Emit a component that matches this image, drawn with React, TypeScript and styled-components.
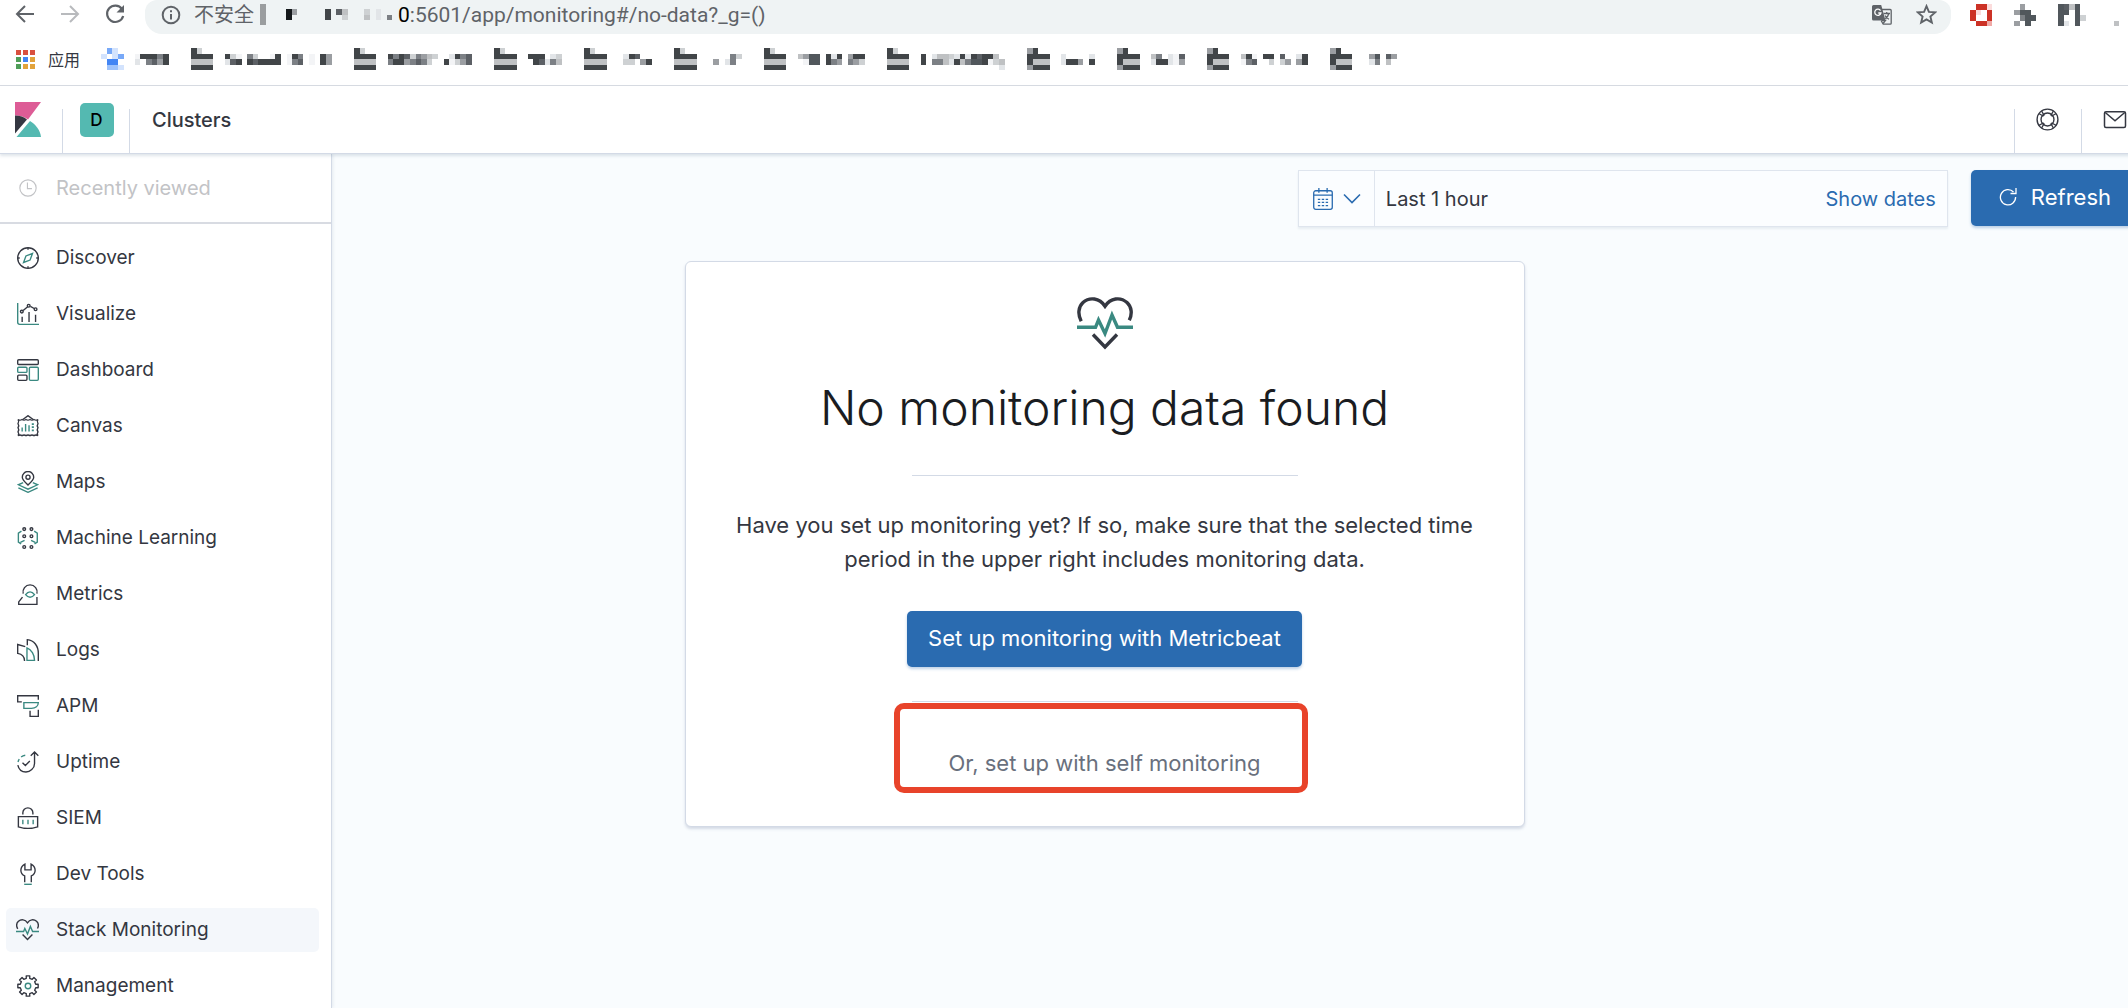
import React from "react";
import styled, { createGlobalStyle, css } from "styled-components";

const color = {
  ink: "#343741",
  title: "#1a1c21",
  subdued: "#69707d",
  faint: "#c2c3c6",
  border: "#d3dae6",
  rule: "#d8dbe2",
  page: "#f9fcfe",
  primary: "#2a6bb0",
  teal: "#3a8981",
  chrome: "#5f6368",
  red: "#e8432a",
};

const GlobalStyle = createGlobalStyle`
  *, *::before, *::after { box-sizing: border-box; }
  body {
    margin: 0;
    background: #fff;
    color: ${color.ink};
    font-family: Inter, "Noto Sans CJK SC", sans-serif;
    font-size: 20px;
    line-height: 28px;
    overflow: hidden;
  }
  button, input { font: inherit; color: inherit; }
  a { color: inherit; text-decoration: none; }
`;

const plainButton = css`
  display: flex;
  align-items: center;
  justify-content: center;
  padding: 0;
  border: 0;
  background: none;
  cursor: pointer;
`;

const Page = styled.div`
  display: flex;
  flex-direction: column;
  height: 100vh;
  margin-right: -20px;
`;

/* ---------- browser chrome ---------- */

const AddressRow = styled.div`
  display: flex;
  align-items: center;
  height: 34px;
  padding-left: 13px;
`;

const NavButtons = styled.div`
  display: flex;
  gap: 21px;
  padding-bottom: 6px;
  margin-right: 18px;
`;

const ChromeButton = styled.button<{ $dim?: boolean }>`
  ${plainButton}
  color: ${(p) => (p.$dim ? "#b8babd" : color.chrome)};
`;

const AddressBar = styled.div`
  display: flex;
  flex: 1;
  align-items: center;
  height: 34px;
  padding: 0 14px 5px 16px;
  border-radius: 12px 12px 17px 17px;
  background: #eff3f4;
  color: ${color.chrome};
  font-family: Roboto, "Noto Sans CJK SC", sans-serif;
`;

const SiteStatus = styled.span`
  margin: 0 6px 0 13px;
  white-space: nowrap;
`;

const Caret = styled.span`
  width: 6px;
  height: 21px;
  margin-right: 20px;
  background: #9a9d9f;
`;

const HostEnd = styled.label`
  color: #000;
  font-size: 21px;
`;

const UrlInput = styled.input`
  flex: 1;
  min-width: 0;
  height: 28px;
  padding: 0;
  border: 0;
  outline: 0;
  background: none;
  font-size: 21px;
`;

const AddressActions = styled.div`
  display: flex;
  gap: 24px;
`;

const Extensions = styled.div`
  display: flex;
  gap: 22px;
  padding: 0 29px 5px 19px;
`;

const BookmarkBar = styled.nav`
  display: flex;
  align-items: center;
  height: 52px;
  padding: 0 0 1px 16px;
  border-bottom: 1px solid ${color.rule};
`;

const AppsLink = styled.a`
  display: flex;
  align-items: center;
  gap: 13px;
  width: 85px;
  font-family: "Noto Sans CJK SC", sans-serif;
  font-size: 16px;
`;

const Bookmark = styled.a`
  display: flex;
`;

/* ---------- Kibana header ---------- */

const Header = styled.header`
  display: flex;
  flex: none;
  height: 68px;
  border-bottom: 1px solid ${color.border};
  box-shadow: 0 2px 3px rgba(80, 110, 140, 0.18);
  position: relative;
  z-index: 2;
  background: #fff;
`;

const HeaderCell = styled.div<{ $side: "left" | "right" }>`
  display: flex;
  align-items: center;
  justify-content: center;
  width: 67px;
  background: linear-gradient(${color.border}, ${color.border}) no-repeat
    ${(p) => p.$side} 23px / 1px 100%;
  background-position: ${(p) => (p.$side === "left" ? "right" : "left")} 23px;
`;

const LogoLink = styled.a`
  display: flex;
  align-items: center;
  width: 63px;
  padding-left: 15px;
  background: linear-gradient(${color.border}, ${color.border}) no-repeat right 23px / 1px 100%;
`;

const SpaceBadge = styled.button`
  ${plainButton}
  width: 34px;
  height: 34px;
  border-radius: 5px;
  background: #54b9b1;
  color: #000;
  font-size: 17px;
  font-weight: 500;
`;

const Breadcrumb = styled.h1`
  flex: 1;
  align-self: center;
  margin: 0 0 0 22px;
  font-size: 20px;
  font-weight: 500;
`;

const IconButton = styled.button`
  ${plainButton}
`;

/* ---------- body ---------- */

const Body = styled.div`
  display: grid;
  grid-template-columns: 61px 271px minmax(0, 1fr);
  flex: 1;
  min-height: 0;
  background: ${color.page};
`;

const Sidebar = styled.nav`
  grid-area: 1 / 1 / 2 / 3;
  z-index: 1;
  min-height: 0;
  overflow: hidden;
  border-right: 1px solid ${color.border};
  box-shadow: 1px 0 3px rgba(80, 110, 140, 0.12);
  background: #fff;
`;

const RecentSection = styled.div`
  padding: 12px 6px;
  border-bottom: 2px solid ${color.rule};
`;

const LinkList = styled.ul`
  display: flex;
  flex-direction: column;
  gap: 12px;
  margin: 0;
  padding: 12px 12px 12px 6px;
  list-style: none;
  font-size: 19px;
`;

const NavLink = styled.a<{ $active?: boolean; $disabled?: boolean }>`
  display: flex;
  align-items: center;
  gap: 17px;
  height: 44px;
  padding-left: 10px;
  border-radius: 5px;
  background: ${(p) => (p.$active ? "#f4f7fb" : "none")};
  color: ${(p) => (p.$disabled ? color.faint : color.ink)};
`;

const IconSlot = styled.span`
  display: flex;
  justify-content: center;
  width: 23px;
`;

const Main = styled.main`
  grid-area: 1 / 2 / 2 / 4;
  min-width: 0;
`;

const Toolbar = styled.div`
  display: flex;
  justify-content: flex-end;
  gap: 23px;
  padding: 16px 9px 34px;
`;

const DatePicker = styled.div`
  display: flex;
  width: 650px;
  height: 57px;
  border: 1px solid #dfe5ee;
  background: #fbfdff;
  box-shadow: 0 2px 2px rgba(80, 110, 140, 0.1);
`;

const QuickSelect = styled.button`
  ${plainButton}
  gap: 9px;
  width: 76px;
  border-right: 1px solid #dfe5ee;
  color: ${color.primary};
`;

const DateRange = styled.button`
  ${plainButton}
  flex: 1;
  justify-content: space-between;
  padding: 0 11px;
`;

const ShowDates = styled.span`
  color: ${color.primary};
`;

const PrimaryButton = styled.button<{ $pad: number }>`
  ${plainButton}
  gap: 14px;
  height: 56px;
  padding: 0 ${(p) => p.$pad}px 2px;
  border-radius: 5px;
  background: ${color.primary};
  box-shadow: 0 2px 3px rgba(42, 107, 176, 0.3);
  color: #fff;
  font-size: 22px;
  white-space: nowrap;
`;

const CardArea = styled.div`
  display: flex;
  justify-content: center;
`;

const Card = styled.section`
  display: flex;
  flex-direction: column;
  align-items: center;
  width: 840px;
  padding: 35px 40px 48px;
  border: 1px solid ${color.border};
  border-radius: 6px;
  background: #fff;
  box-shadow: 0 2px 3px rgba(80, 100, 140, 0.22);
  text-align: center;
`;

const CardTitle = styled.h2`
  margin: 22px 0 34px;
  color: ${color.title};
  font-size: 48px;
  font-weight: 300;
  line-height: 66px;
`;

const Rule = styled.hr`
  width: 386px;
  height: 1px;
  margin: 0;
  border: 0;
  background: ${color.border};
`;

const Prompt = styled.p`
  margin: 32px -10px 35px;
  font-size: 22px;
  line-height: 34px;
`;

const SelfMonitoring = styled.div`
  position: relative;
  display: flex;
  flex-direction: column;
  align-items: center;
  gap: 46px;
  margin-top: 34px;
`;

const TextButton = styled.button`
  ${plainButton}
  color: ${color.subdued};
  font-size: 22px;
  line-height: 30px;
`;

const Highlight = styled.span`
  position: absolute;
  top: 2px;
  left: -18px;
  right: -10px;
  height: 90px;
  border: 6px solid ${color.red};
  border-radius: 10px;
  pointer-events: none;
`;

/* ---------- pixelated marks ---------- */

const shades: Record<string, string> = {
  "1": "#f3f4f6",
  "2": "#e2e5e8",
  "3": "#ced1d3",
  "4": "#bfc1c3",
  "5": "#9b9ea2",
  "6": "#7c8085",
  "7": "#5c6065",
  "8": "#51575c",
  "9": "#414548",
  K: "#14181b",
  b: "#4285f4",
  c: "#78a9f8",
  d: "#9dc2fb",
  e: "#d3e3fd",
  r: "#cc3226",
  s: "#f0a9a6",
  t: "#fbdcdc",
};

const CELL = 5.61;

function Pixels({ rows, cols }: { rows: string[]; cols: number }) {
  return (
    <svg
      width={Math.round(cols * CELL)}
      height={Math.round(rows.length * CELL)}
      viewBox={`0 0 ${cols} ${rows.length}`}
      preserveAspectRatio="none"
      shapeRendering="crispEdges"
      aria-hidden="true"
    >
      {rows.flatMap((row, y) =>
        row.split("").map((c, x) =>
          shades[c] ? <rect key={`${x}-${y}`} x={x} y={y} width="1" height="1" fill={shades[c]} /> : null
        )
      )}
    </svg>
  );
}

const bookmarks: { cols: number; rows: string[] }[] = [
  { cols: 16, rows: [".ce", "e.ec..199969", ".bb...2.6759", ".dde"] },
  { cols: 29, rows: ["93", "9999..931.63..19.196.1.95", "4444..279.979999.167.1.95", "9999"] },
  { cols: 25, rows: ["93", "9999..969736543..2967", "4444..69956763..91357", "9999"] },
  { cols: 16, rows: ["93", "9999..999.23", "4444...97264", "9999"] },
  { cols: 16, rows: ["93", "9999...297", "4444...33.59", "9999"] },
  { cols: 16, rows: ["93", "9999......63", "4444...5.26", "9999"] },
  { cols: 22, rows: ["93", "9999..4588.929.599", "4444...188.965.653", "9999"] },
  { cols: 25, rows: ["93", "9999..9.244329297994", "4444..9.6642946889134", "9999................2"] },
  { cols: 16, rows: ["59", "9999..2....2", "9444..2995.9", "5999"] },
  { cols: 16, rows: ["59", "9999..46.217", "9444..299215", "5999"] },
  { cols: 22, rows: ["59", "9999..491.99.7..29", "9444..167..3.35.59", "5999"] },
  { cols: 12, rows: ["59", "9999...58.75", "9444...26.4", "5999"] },
];

const hostPixels = ["K5.....9.74...3.2", "K......9..3...4.2.6"];

const extensions: { cols: number; rows: string[] }[] = [
  { cols: 4, rows: [".rrt", "rt.r", "r..r", ".rrs"] },
  { cols: 4, rows: [".5..", "588.", ".688", "5.8."] },
  { cols: 5, rows: ["8748", "88.8", "8..83", "82.8"] },
];

/* ---------- icons ---------- */

type IconProps = { size?: number; children: React.ReactNode; box?: number; weight?: number };

function Icon({ size = 22, box = 32, weight = 2, children }: IconProps) {
  return (
    <svg
      width={size}
      height={size}
      viewBox={`0 0 ${box} ${box}`}
      fill="none"
      stroke="currentColor"
      strokeWidth={weight}
      aria-hidden="true"
    >
      {children}
    </svg>
  );
}

const Accent = styled.g`
  stroke: ${color.teal};
`;

function HeartIcon({ size }: { size: number }) {
  return (
    <Icon size={size} box={56} weight={3.4}>
      <path d="M4.2 24.2C.6 17.500 1.200 10 6 5.600 12.500-.4 22.500.8 28 9.200 33.500.8 43.500-.4 50 5.600c4.800 4.400 5.400 11.400 2.300 17.600" />
      <path d="M16 37.500l12 12.500 12-12.500" />
      <Accent>
        <path d="M0 30.300h18.500l3-7.300 6.500 13.500 7-18.500 5.500 12.300H56" />
      </Accent>
    </Icon>
  );
}

function gearPath(teeth: number, outer: number, inner: number) {
  const points: string[] = [];
  const step = (Math.PI * 2) / teeth;
  for (let i = 0; i < teeth; i++) {
    const a = i * step - Math.PI / 2;
    [
      [inner, -0.28],
      [outer, -0.22],
      [outer, 0.22],
      [inner, 0.28],
    ].forEach(([r, t]) => {
      points.push(`${16 + r * Math.cos(a + t * step)} ${16 + r * Math.sin(a + t * step)}`);
    });
  }
  return `M${points.join("L")}Z`;
}

const icons: Record<string, React.ReactNode> = {
  Discover: (
    <Icon>
      <circle cx="16" cy="16" r="15" />
      <path d="M16 1v3M16 28v3M1 16h3M28 16h3" />
      <Accent>
        <path d="M22.500 9.500l-3.500 9.500-9.500 3.500 3.500-9.500z" />
      </Accent>
    </Icon>
  ),
  Visualize: (
    <Icon>
      <path d="M7.500 20v7.500M17.500 13v14.500M27 17v10.500M9 11l6.500-5.500M19.500 5l5.500 3" />
      <circle cx="7" cy="12.500" r="2" />
      <circle cx="17" cy="4" r="2" />
      <circle cx="27" cy="9" r="2" />
      <Accent>
        <path d="M1 0v28a3 3 0 0 0 3 3h28" />
      </Accent>
    </Icon>
  ),
  Dashboard: (
    <Icon>
      <rect x="1" y="1" width="30" height="7" rx="1.500" />
      <rect x="1" y="23.500" width="13.500" height="7.500" rx="1.500" />
      <Accent>
        <rect x="1" y="12" width="13.500" height="7.500" rx="1.500" />
        <rect x="18" y="12" width="13" height="19" rx="1.500" />
      </Accent>
    </Icon>
  ),
  Canvas: (
    <Icon>
      <path d="M8 7l8-6 8 6" />
      <path d="M1.500 6.500q3 2 5.800 0 2.900 2 5.800 0 2.900 2 5.800 0 2.900 2 5.800 0 2.900 2 5.800 0-2 3 0 6-2 3 0 6-2 3 0 6-2 3 0 5.500-3-2-5.800 0-2.900-2-5.800 0-2.900-2-5.800 0-2.900-2-5.800 0-2.900-2-5.800 0 2-2.500 0-5.500 2-3 0-6 2-3 0-6 2-3 0-6z" />
      <Accent>
        <path d="M7.500 18v6M12.500 13v11M17.500 15v9" />
        <path d="M23 12v13" strokeWidth="3" strokeDasharray="2.500 2" />
      </Accent>
    </Icon>
  ),
  Maps: (
    <Icon>
      <path d="M16 20.500c-5-5-8.300-8-8.300-11.500a8.300 8.300 0 0 1 16.600 0c0 3.500-3.300 6.500-8.300 11.500z" />
      <circle cx="16" cy="9" r="3" />
      <Accent>
        <path d="M9 17l-7 3 14 6.500L30 20l-7-3M2 24.500L16 31l14-6.500" />
      </Accent>
    </Icon>
  ),
  "Machine Learning": (
    <Icon>
      {[3, 13.5, 29].map((y) => (
        <React.Fragment key={y}>
          <circle cx="10.500" cy={y} r="2" />
          <circle cx="21" cy={y} r="2" />
        </React.Fragment>
      ))}
      <Accent>
        <path d="M6.500 6L2 9v13l4 2.500M25 6l4.500 3v13l-4 2.500M5 22.500l6-3M26.500 22.500l-6-3" />
      </Accent>
    </Icon>
  ),
  Metrics: (
    <Icon>
      <path d="M9 15.500a10.300 10.300 0 1 1 20 0M8 20.500l-5.500 7V31H29V20.500" />
      <Accent>
        <path d="M12.500 17c4-5.500 9-5.500 13 0-4 5-9 5-13 0z" />
      </Accent>
    </Icon>
  ),
  Logs: (
    <Icon>
      <path d="M12 11L1 8v13c6 1 10 5 10 11M15 9V1c10 1 16 9 16 20v11" />
      <Accent>
        <path d="M14.500 13c6.500 2.500 11 10 11 18h-11z" />
      </Accent>
    </Icon>
  ),
  APM: (
    <Icon>
      <path d="M7 10H1V1h30v6M19 23v8h12V21.500" />
      <Accent>
        <path d="M10 11h21c0 5-4 8.500-10 8.500H10z" />
      </Accent>
    </Icon>
  ),
  Uptime: (
    <Icon>
      <path d="M1.200 20.500C2.500 26.500 7 30.500 13 30.500S25.500 25.500 25.500 18V2M20 7l5.500-5.500L31 7M8 17l4.200 4 6.500-6.500" />
      <Accent>
        <path d="M1.500 16c.3-1.500 1-3 1.800-4.200M6 8.800C7.500 7.500 9.500 6.500 12 6.200" />
      </Accent>
    </Icon>
  ),
  SIEM: (
    <Icon>
      <path d="M8.500 11V8.500a7.300 7.300 0 0 1 14.600 0V11M2 14h28v15c-8 2.700-20 2.700-28 0z" />
      <Accent>
        <path d="M8.500 18.500V25M16 18.500V25M23.500 18.500V25" />
      </Accent>
    </Icon>
  ),
  "Dev Tools": (
    <Icon>
      <path d="M11.200 28V18.800C3.500 15.500 4 5 11.500 1.500V10h9V1.500C28 5 28.500 15.500 20.800 18.800V28" />
      <Accent>
        <path d="M10.500 31h11" />
      </Accent>
    </Icon>
  ),
  "Stack Monitoring": <HeartIcon size={23} />,
  Management: (
    <Icon>
      <path d={gearPath(8, 15, 11.5)} strokeLinejoin="round" />
      <Accent>
        <circle cx="16" cy="16" r="4" />
      </Accent>
    </Icon>
  ),
};

const ClockIcon = () => (
  <Icon size={18}>
    <circle cx="16" cy="16" r="14.500" />
    <path d="M15 6v11h8" />
  </Icon>
);

const ArrowIcon = ({ back }: { back?: boolean }) => (
  <Icon size={24} box={24}>
    <path d={back ? "M21 12H4M12 4l-8 8 8 8" : "M3 12h17M12 4l8 8-8 8"} />
  </Icon>
);

const ReloadIcon = () => (
  <Icon size={24} box={24} weight={2.2}>
    <path d="M19 7A8.200 8.200 0 1 0 20.200 14" />
    <path d="M21 3v7.500h-7.500z" fill="currentColor" stroke="none" />
  </Icon>
);

const InfoIcon = () => (
  <Icon size={20} box={20}>
    <circle cx="10" cy="10" r="8.300" />
    <path d="M10 9v5.500M10 5.300v2" />
  </Icon>
);

const TranslateIcon = () => (
  <Icon size={20} box={20} weight={1.3}>
    <path d="M10 4.500h8.200a1 1 0 0 1 1 1v12.700a1 1 0 0 1-1 1h-7l-2-3.500" />
    <path d="M1.500 0h7.700l4.300 15.500h-12A1.500 1.500 0 0 1 0 14V1.500A1.500 1.500 0 0 1 1.500 0z" fill="currentColor" stroke="none" />
    <path d="M8.500 5.600a3.100 3.100 0 1 0 .4 2.400H6.300" stroke="#fff" />
    <path d="M11.500 8.500H18M14.700 7v1.500M16.800 8.500c-.5 2.500-2 4.200-3.600 5.300M13 10.500c.8 1.500 2.400 2.900 4 3.800M9.500 15.500h4l-2.500 3" />
  </Icon>
);

const StarIcon = () => (
  <Icon size={21} box={20} weight={1.8}>
    <path d="M10 2l2.300 5.500 5.900.5-4.500 3.900 1.400 5.800L10 14.600l-5.100 3.100 1.400-5.800L1.800 8l5.900-.5z" />
  </Icon>
);

const appColors = ["#d9503f", "#d9503f", "#d9503f", "#4f9e58", "#4285f4", "#e2a33c", "#4f9e58", "#e2a33c", "#e2a33c"];

const AppsIcon = () => (
  <svg width="19" height="19" viewBox="0 0 19 19" aria-hidden="true">
    {appColors.map((fill, i) => (
      <rect key={i} x={(i % 3) * 7} y={Math.floor(i / 3) * 7} width="5" height="5" fill={fill} />
    ))}
  </svg>
);

const KibanaLogo = () => (
  <svg width="26" height="35" viewBox="0 0 26 35" aria-hidden="true">
    <path d="M0 0h26L13 17.500C9.500 15 5 13.500 0 13.500z" fill="#dd5c96" />
    <path d="M0 13.500c5 0 9 1.500 12 4L0 31.500z" fill="#343741" />
    <path d="M15 19c6 3.500 10.300 9.500 11 16H1.500z" fill="#54b9b1" />
  </svg>
);

const HelpIcon = () => (
  <Icon size={23} weight={1.9}>
    <circle cx="16" cy="16" r="14.500" />
    <circle cx="16" cy="16" r="9" />
    <path d="M4.500 8l6 3.500M8 4.500l3.500 6M27.500 8l-6 3.500M24 4.500l-3.500 6M4.500 24l6-3.500M8 27.500l3.500-6M27.500 24l-6-3.500M24 27.500l-3.500-6" />
  </Icon>
);

const MailIcon = () => (
  <Icon size={24}>
    <rect x="2" y="5" width="28" height="21" rx="2" />
    <path d="M3 6l13 11L29 6" />
  </Icon>
);

const CalendarIcon = () => (
  <Icon size={22} weight={1.9}>
    <rect x="2.500" y="4" width="27" height="27" rx="3" />
    <path d="M2.500 10.500h27M10 0v7M22 0v7" />
    <path d="M8.500 16.500h15M8.500 21h15M8.500 25.500h15" strokeDasharray="3.500 2.200" />
  </Icon>
);

const ChevronIcon = () => (
  <Icon size={18} box={18} weight={1.6}>
    <path d="M1 4.500l8 8 8-8" />
  </Icon>
);

const RefreshIcon = () => (
  <Icon size={18} box={18} weight={1.3}>
    <path d="M14.500 4A7.600 7.600 0 1 0 16.600 9M17 0v5.500h-5.500" />
  </Icon>
);

export default function App() {
  return (
    <>
      <GlobalStyle />
      <Page>
        <AddressRow>
          <NavButtons>
            <ChromeButton aria-label="Back"><ArrowIcon back /></ChromeButton>
            <ChromeButton aria-label="Forward" $dim><ArrowIcon /></ChromeButton>
            <ChromeButton aria-label="Reload"><ReloadIcon /></ChromeButton>
          </NavButtons>
          <AddressBar>
            <InfoIcon />
            <SiteStatus>不安全</SiteStatus>
            <Caret />
            <Pixels rows={hostPixels} cols={20} />
            <HostEnd htmlFor="url">0</HostEnd>
            <UrlInput id="url" defaultValue=":5601/app/monitoring#/no-data?_g=()" />
            <AddressActions>
              <ChromeButton aria-label="Translate"><TranslateIcon /></ChromeButton>
              <ChromeButton aria-label="Bookmark this page"><StarIcon /></ChromeButton>
            </AddressActions>
          </AddressBar>
          <Extensions>
            {extensions.map((e, i) => (
              <ChromeButton key={i} aria-label={`Extension ${i + 1}`}>
                <Pixels {...e} />
              </ChromeButton>
            ))}
            <ChromeButton aria-label="Menu">
              <Pixels rows={["..", "..", "..", ".4"]} cols={2} />
            </ChromeButton>
          </Extensions>
        </AddressRow>

        <BookmarkBar aria-label="Bookmarks">
          <AppsLink href="#apps"><AppsIcon />应用</AppsLink>
          {bookmarks.map((b, i) => (
            <Bookmark key={i} href="#bookmark" aria-label={`Bookmark ${i + 1}`}>
              <Pixels {...b} />
            </Bookmark>
          ))}
        </BookmarkBar>

        <Header>
          <LogoLink href="#home" aria-label="Kibana home"><KibanaLogo /></LogoLink>
          <HeaderCell $side="left"><SpaceBadge>D</SpaceBadge></HeaderCell>
          <Breadcrumb>Clusters</Breadcrumb>
          <HeaderCell $side="right"><IconButton aria-label="Help"><HelpIcon /></IconButton></HeaderCell>
          <HeaderCell $side="right"><IconButton aria-label="News"><MailIcon /></IconButton></HeaderCell>
        </Header>

        <Body>
          <Sidebar aria-label="Kibana">
            <RecentSection>
              <NavLink href="#recent" $disabled>
                <IconSlot><ClockIcon /></IconSlot>
                Recently viewed
              </NavLink>
            </RecentSection>
            <LinkList>
              {Object.entries(icons).map(([name, icon]) => (
                <li key={name}>
                  <NavLink href="#app" $active={name === "Stack Monitoring"}>
                    <IconSlot>{icon}</IconSlot>
                    {name}
                  </NavLink>
                </li>
              ))}
            </LinkList>
          </Sidebar>

          <Main>
            <Toolbar>
              <DatePicker>
                <QuickSelect aria-label="Quick select"><CalendarIcon /><ChevronIcon /></QuickSelect>
                <DateRange>
                  Last 1 hour
                  <ShowDates>Show dates</ShowDates>
                </DateRange>
              </DatePicker>
              <PrimaryButton $pad={28}><RefreshIcon />Refresh</PrimaryButton>
            </Toolbar>
            <CardArea>
              <Card>
                <HeartIcon size={56} />
                <CardTitle>No monitoring data found</CardTitle>
                <Rule />
                <Prompt>
                  Have you set up monitoring yet? If so, make sure that the selected time period in the upper right
                  includes monitoring data.
                </Prompt>
                <PrimaryButton $pad={21}>Set up monitoring with Metricbeat</PrimaryButton>
                <SelfMonitoring>
                  <Rule />
                  <TextButton>Or, set up with self monitoring</TextButton>
                  <Highlight />
                </SelfMonitoring>
              </Card>
            </CardArea>
          </Main>
        </Body>
      </Page>
    </>
  );
}
